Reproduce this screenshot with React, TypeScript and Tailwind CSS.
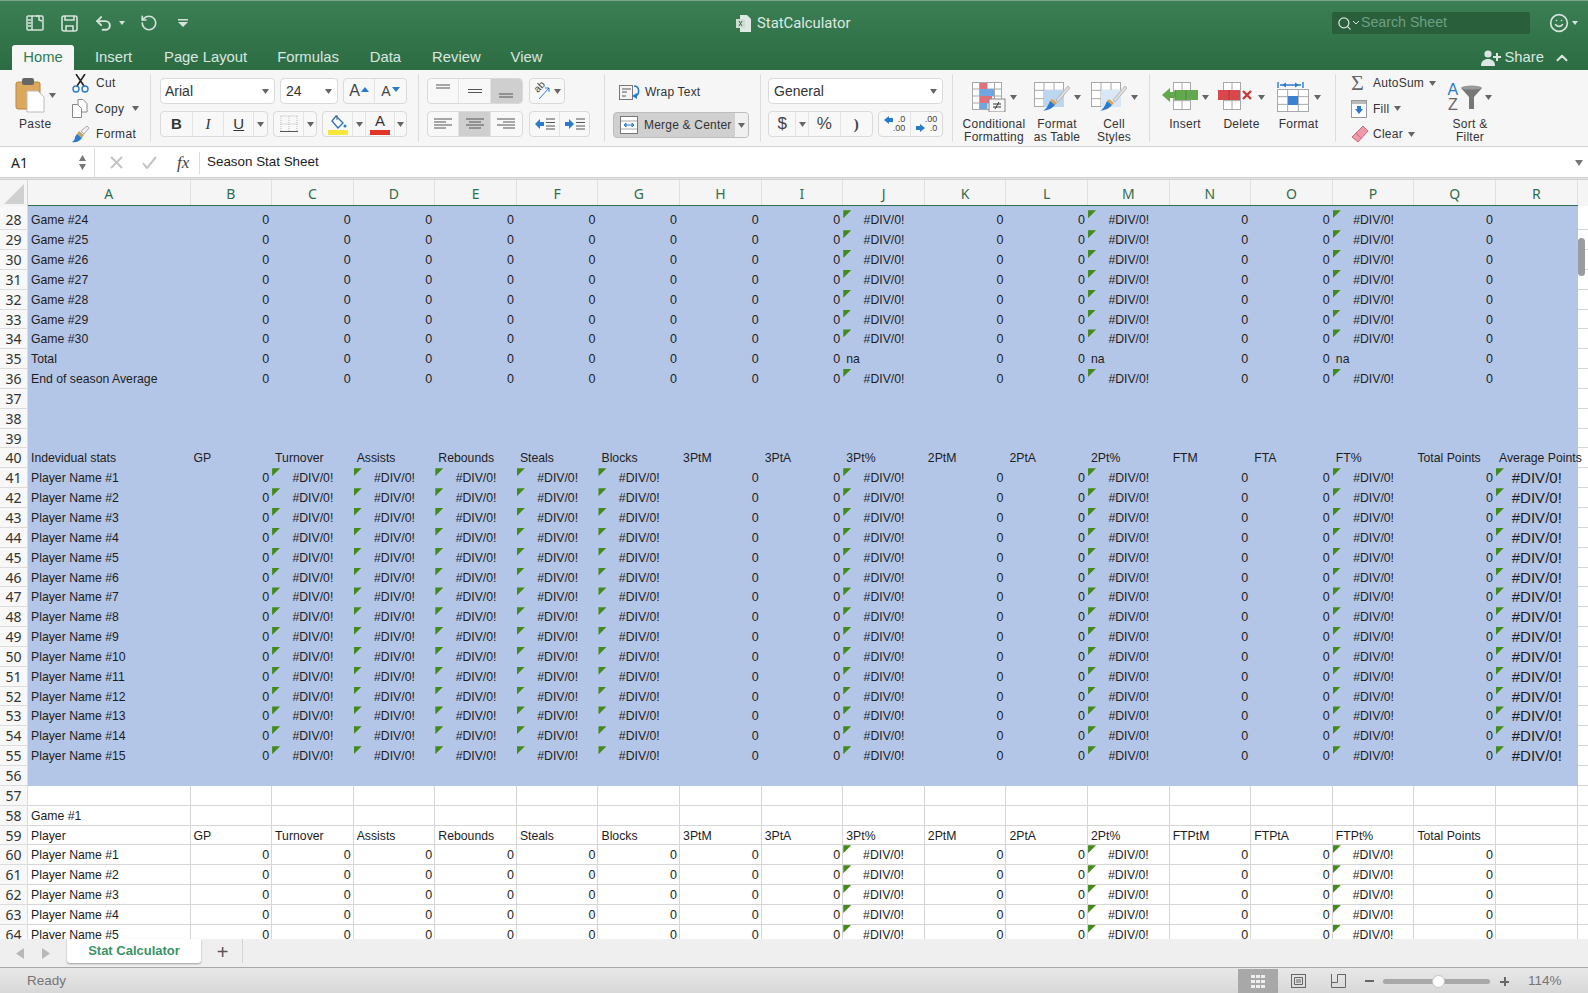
import { ReactNode } from 'react';
import { ChevronUp, RotateCcw, Search, Smile, Undo2 } from 'lucide-react';

const ARIAL = '"Liberation Sans", Arial, sans-serif';
const COLS = ['B', 'C', 'D', 'E', 'F', 'G', 'H', 'I', 'J', 'K', 'L', 'M', 'N', 'O', 'P', 'Q', 'R'];
const DIV = '#DIV/0!';

// game rows: zeros with the three percent columns erroring
const gameCells = () => ['0', '0', '0', '0', '0', '0', '0', '0', DIV, '0', '0', DIV, '0', '0', DIV, '0', ''];
const playerCells = () => ['0', DIV, DIV, DIV, DIV, DIV, '0', '0', DIV, '0', '0', DIV, '0', '0', DIV, '0', 'BIG'];

type RowData = { n: number; a: string; cells: string[] };

const rows: RowData[] = [];
for (let i = 0; i < 7; i++) rows.push({ n: 28 + i, a: `Game #${24 + i}`, cells: gameCells() });
rows.push({ n: 35, a: 'Total', cells: ['0', '0', '0', '0', '0', '0', '0', '0', 'na', '0', '0', 'na', '0', '0', 'na', '0', ''] });
rows.push({ n: 36, a: 'End of season Average', cells: gameCells() });
rows.push({ n: 37, a: '', cells: [] }, { n: 38, a: '', cells: [] }, { n: 39, a: '', cells: [] });
rows.push({
  n: 40,
  a: 'Indevidual stats',
  cells: ['GP', 'Turnover', 'Assists', 'Rebounds', 'Steals', 'Blocks', '3PtM', '3PtA', '3Pt%', '2PtM', '2PtA', '2Pt%', 'FTM', 'FTA', 'FT%', 'Total Points', 'Average Points'],
});
for (let i = 1; i <= 15; i++) rows.push({ n: 40 + i, a: `Player Name #${i}`, cells: playerCells() });
rows.push({ n: 56, a: '', cells: [] }, { n: 57, a: '', cells: [] }, { n: 58, a: 'Game #1', cells: [] });
rows.push({
  n: 59,
  a: 'Player',
  cells: ['GP', 'Turnover', 'Assists', 'Rebounds', 'Steals', 'Blocks', '3PtM', '3PtA', '3Pt%', '2PtM', '2PtA', '2Pt%', 'FTPtM', 'FTPtA', 'FTPt%', 'Total Points', ''],
});
for (let i = 1; i <= 5; i++) rows.push({ n: 59 + i, a: `Player Name #${i}`, cells: gameCells() });

function Triangle() {
  return <span className="absolute left-0 top-0 h-[8px] w-[8px] bg-[#428a1a] [clip-path:polygon(0_0,100%_0,0_100%)]" />;
}

function Cell({ value, selected }: { value: string; selected: boolean }) {
  const border = selected ? '' : 'border-r border-b border-[#d6d6d6]';
  const base = `relative h-full w-[81.6px] shrink-0 whitespace-nowrap ${border}`;
  if (value === '0')
    return <div className={`${base} text-right text-[12.5px] leading-[21.5px] ${selected ? 'pr-[3px]' : 'pr-[2px]'}`}>0</div>;
  if (value === DIV)
    return (
      <div className={`${base} text-center text-[12.25px] leading-[21.5px]`}>
        <Triangle />
        {DIV}
      </div>
    );
  if (value === 'BIG')
    return (
      <div className={`${base} text-center text-[15px] leading-[20px]`}>
        <Triangle />
        {DIV}
      </div>
    );
  return <div className={`${base} pl-[3px] text-[12.25px] leading-[21.5px]`}>{value}</div>;
}

function SheetRow({ row }: { row: RowData }) {
  const selected = row.n <= 56;
  return (
    <div className="flex h-[19.85px] shrink-0">
      <div className="w-[28px] shrink-0 border-r border-b border-[#dcdcdc] bg-[#f8f8f8] text-center font-['Noto_Sans'] text-[14px] leading-[20px] text-[#333]">
        {row.n}
      </div>
      <div className={`flex ${selected ? 'bg-[#b4c6e7]' : ''}`}>
        <div className={`h-full w-[162.5px] shrink-0 whitespace-nowrap pl-[3px] text-[12.25px] leading-[21.5px] ${selected ? '' : 'border-r border-b border-[#d6d6d6]'}`}>
          {row.a}
        </div>
        {COLS.map((c, i) => (
          <Cell key={c} value={row.cells[i] ?? ''} selected={selected} />
        ))}
      </div>
      <div className="flex-1 border-b border-[#d6d6d6]" />
    </div>
  );
}

function Caret({ className = '' }: { className?: string }) {
  return (
    <svg width="7" height="5" viewBox="0 0 7 5" className={`shrink-0 ${className}`}>
      <path d="M0 0h7L3.5 5z" fill="#666" />
    </svg>
  );
}

function Sep() {
  return <div className="h-[68px] w-px shrink-0 self-center bg-[#dedede]" />;
}

function Box({ children, className = '' }: { children: ReactNode; className?: string }) {
  return (
    <div className={`flex h-[26px] items-stretch overflow-hidden rounded-[4px] border border-[#dadada] bg-[#f8f8f8] ${className}`}>
      {children}
    </div>
  );
}

function Btn({ children, w, active, last }: { children: ReactNode; w: string; active?: boolean; last?: boolean }) {
  return (
    <div className={`flex items-center justify-center ${w} ${active ? 'bg-[#cfcfcf]' : ''} ${last ? '' : 'border-r border-[#e4e4e4]'}`}>
      {children}
    </div>
  );
}

function Bars({ offset }: { offset: number }) {
  return (
    <svg width="18" height="12" viewBox="0 0 18 12" stroke="#555" strokeWidth="1">
      <line x1="0" x2="18" y1="1" y2="1" />
      <line x1={offset === 0 ? 0 : offset === 1 ? 3 : 6} x2={offset === 0 ? 12 : offset === 1 ? 15 : 18} y1="4" y2="4" />
      <line x1="0" x2="18" y1="7" y2="7" />
      <line x1={offset === 0 ? 0 : offset === 1 ? 3 : 6} x2={offset === 0 ? 12 : offset === 1 ? 15 : 18} y1="10" y2="10" />
    </svg>
  );
}

function IndentIcon({ left }: { left: boolean }) {
  return (
    <svg width="20" height="12" viewBox="0 0 20 12">
      <path d={left ? 'M0 6l5-5v3h4v4H5v3z' : 'M9 6L4 1v3H0v4h4v3z'} fill="#2a7bcb" />
      <path d="M11 1h9M11 4.5h9M11 8h9M11 11h9" stroke="#555" />
    </svg>
  );
}

function ClipboardIcon() {
  return (
    <svg width="30" height="36" viewBox="0 0 30 36">
      <rect x="1" y="5" width="24" height="27" rx="2" fill="#dca85c" stroke="#b9873f" />
      <rect x="7" y="1" width="12" height="7" rx="2" fill="#666" />
      <path d="M12 14h11l6 6v15H12z" fill="#fff" stroke="#bbb" />
    </svg>
  );
}

function ScissorsIcon() {
  return (
    <svg width="17" height="19" viewBox="0 0 17 19" fill="none">
      <path d="M4 0l8 12M13 0L5 12" stroke="#222" strokeWidth="1.6" />
      <circle cx="4" cy="15" r="3" stroke="#2a7bcb" strokeWidth="1.4" />
      <circle cx="13" cy="15" r="3" stroke="#2a7bcb" strokeWidth="1.4" />
    </svg>
  );
}

function CopyIcon() {
  return (
    <svg width="16" height="19" viewBox="0 0 16 19" fill="#fff" stroke="#888">
      <path d="M6 .5h5l4 4V13H6z" />
      <path d="M.5 5.5h5l4 4v9h-9z" />
    </svg>
  );
}

function BrushIcon() {
  return (
    <svg width="17" height="17" viewBox="0 0 17 17">
      <path d="M9 5l6-5 2 2-5 6z" fill="#f2f2f2" stroke="#888" strokeWidth=".7" />
      <path d="M7 5l5 4-2 3-5-4z" fill="#c9a469" />
      <path d="M5 8l5 4c-2 3-6 5-10 4 2-1 3-3 3-5z" fill="#2a7bcb" />
    </svg>
  );
}

function CellGrid({ w, h, cols, rowsN }: { w: number; h: number; cols: number; rowsN: number }) {
  const lines: ReactNode[] = [];
  for (let i = 1; i < cols; i++) lines.push(<line key={`c${i}`} x1={(w / cols) * i} x2={(w / cols) * i} y1="0" y2={h} />);
  for (let i = 1; i < rowsN; i++) lines.push(<line key={`r${i}`} x1="0" x2={w} y1={(h / rowsN) * i} y2={(h / rowsN) * i} />);
  return (
    <g stroke="#a8a8a8" fill="none">
      <rect x=".5" y=".5" width={w - 1} height={h - 1} fill="#fff" />
      {lines}
    </g>
  );
}

function ConditionalIcon() {
  return (
    <svg width="34" height="30" viewBox="0 0 34 30">
      <CellGrid w={30} h={28} cols={4} rowsN={4} />
      <rect x="8" y="1" width="7" height="6" fill="#e0707a" />
      <rect x="8" y="7" width="14" height="7" fill="#6fa8e0" />
      <rect x="8" y="14" width="12" height="7" fill="#e0707a" />
      <rect x="8" y="21" width="7" height="6" fill="#6fa8e0" />
      <rect x="17" y="17" width="16" height="13" fill="#f7f7f7" stroke="#888" />
      <path d="M21 22h8M21 25h8M27 20l-4 7" stroke="#333" />
    </svg>
  );
}

function TableIcon({ styles }: { styles?: boolean }) {
  return (
    <svg width="36" height="30" viewBox="0 0 36 30">
      <CellGrid w={30} h={25} cols={3} rowsN={3} />
      <rect x="10" y="8" width="20" height="17" fill={styles ? '#d9e8f7' : '#bcd6f0'} />
      <path d="M22 18L34 4l2 2-12 14z" fill="#dedede" stroke="#999" strokeWidth=".6" />
      <path d="M18 17l5 4-2 2-5-4z" fill="#e0a24a" />
      <path d="M16 19l5 4c-3 4-8 5-12 6 3-2 5-5 7-10z" fill="#2a7bcb" />
    </svg>
  );
}

function InsertIcon() {
  return (
    <svg width="36" height="30" viewBox="0 0 36 30">
      <g transform="translate(11 0)">
        <CellGrid w={18} h={28} cols={2} rowsN={3} />
      </g>
      <rect x="13" y="8" width="23" height="10" fill="#61a94c" />
      <path d="M13 8v10M24 8v10" stroke="#4c8c3a" />
      <path d="M0 13l8-7v4h5v6H8v4z" fill="#61a94c" />
    </svg>
  );
}

function DeleteIcon() {
  return (
    <svg width="36" height="30" viewBox="0 0 36 30">
      <g transform="translate(5 0)">
        <CellGrid w={18} h={28} cols={2} rowsN={3} />
      </g>
      <rect x="0" y="8" width="22" height="10" fill="#d8474b" />
      <path d="M11 8v10" stroke="#b83438" />
      <path d="M25 9l8 8M33 9l-8 8" stroke="#c8373b" strokeWidth="2.4" />
    </svg>
  );
}

function FormatCellIcon() {
  return (
    <svg width="33" height="30" viewBox="0 0 33 30">
      <path d="M1 0v6M26 0v6M3 3h21" stroke="#2a7bcb" strokeWidth="1.4" />
      <path d="M5 3l4-2.5v5zM22 3l-4-2.5v5z" fill="#2a7bcb" />
      <g transform="translate(0 7)">
        <CellGrid w={32} h={23} cols={3} rowsN={3} />
      </g>
      <rect x="11" y="14" width="10" height="9" fill="#3a82d0" />
    </svg>
  );
}

function BigBtn({ icon, label, w, caret }: { icon: ReactNode; label: ReactNode; w: string; caret?: boolean }) {
  return (
    <div className={`flex flex-col items-center ${w}`}>
      <div className="flex h-[36px] items-center gap-[4px]">
        {icon}
        {caret && <Caret />}
      </div>
      <div className="mt-[3px] whitespace-nowrap text-center text-[12px] leading-[13px] tracking-[0.25px] text-[#333]">{label}</div>
    </div>
  );
}

function TitleBar() {
  return (
    <div className="h-[70px] shrink-0 border-t border-[#79a58a] bg-gradient-to-b from-[#3b7f54] to-[#2c6c42] text-white">
      <div className="relative flex h-[44px] items-center">
        <div className="flex items-center pl-[26px]">
          <svg width="18" height="16" viewBox="0 0 18 16" fill="none" stroke="#d5e3da" strokeWidth="1.5">
            <rect x="1" y="1" width="16" height="14" rx="1" />
            <path d="M6 1v14M2 5h3M2 8h3M2 11h3M10 1h3v4l3 1" />
          </svg>
          <svg width="17" height="17" viewBox="0 0 17 17" fill="none" stroke="#d5e3da" strokeWidth="1.6" className="ml-[17px]">
            <rect x="1" y="1" width="15" height="15" rx="2" />
            <path d="M4 1v4h9V1M5 16v-5h7v5" />
          </svg>
          <Undo2 size={19} strokeWidth={2.5} color="#d5e3da" className="ml-[16px]" />
          <svg width="6" height="4" viewBox="0 0 6 4" className="ml-[6px]">
            <path d="M0 0h6L3 4z" fill="#d5e3da" />
          </svg>
          <RotateCcw size={18} strokeWidth={2.2} color="#d5e3da" className="ml-[15px]" />
          <svg width="10" height="10" viewBox="0 0 10 10" fill="#d5e3da" className="ml-[20px]">
            <rect y="1" width="10" height="1.5" />
            <path d="M0 4h10L5 9z" />
          </svg>
        </div>
        <div className="absolute left-[736px] flex items-center gap-[6px] font-['Roboto'] text-[14.8px] text-[#dfe9e3]">
          <svg width="15" height="17" viewBox="0 0 15 17">
            <path d="M4 0h7l4 4v13H4z" fill="#dfe9e3" />
            <rect x="0" y="4" width="9" height="9" fill="#cfdcd4" />
            <path d="M3 6l3 5M6 6l-3 5" stroke="#2c6c42" />
          </svg>
          StatCalculator
        </div>
        <div className="ml-auto flex items-center pr-[10px]">
          <div className="flex h-[22px] w-[198px] items-center rounded-[2px] bg-[#2a5f3c] pl-[5px] text-[14.2px] font-medium text-[#6e9f82]">
            <Search size={15} color="#d5e3da" />
            <svg width="6" height="4" viewBox="0 0 6 4" className="ml-[1px] mr-[2px]">
              <path d="M0 0l3 3 3-3" stroke="#d5e3da" fill="none" />
            </svg>
            Search Sheet
          </div>
          <Smile size={20} color="#d5e3da" className="ml-[19px]" />
          <svg width="6" height="4" viewBox="0 0 6 4" className="ml-[3px]">
            <path d="M0 0h6L3 4z" fill="#d5e3da" />
          </svg>
        </div>
      </div>
      <div className="flex h-[25px] items-end text-[14.8px] font-medium text-[#dbe7e0]">
        <div className="ml-[12px] flex h-[25px] w-[62px] items-center justify-center rounded-t-[3px] bg-[#f6f6f6] text-[#2f7d54]">Home</div>
        <div className="ml-[21px] flex h-[25px] items-center">Insert</div>
        <div className="ml-[32px] flex h-[25px] items-center">Page Layout</div>
        <div className="ml-[30px] flex h-[25px] items-center">Formulas</div>
        <div className="ml-[31px] flex h-[25px] items-center">Data</div>
        <div className="ml-[31px] flex h-[25px] items-center">Review</div>
        <div className="ml-[30px] flex h-[25px] items-center">View</div>
        <div className="ml-auto flex h-[25px] items-center pr-[17px]">
          <svg width="20" height="16" viewBox="0 0 20 16" fill="#dbe7e0">
            <circle cx="7" cy="4" r="3.6" />
            <path d="M0 16c0-5 3-7 7-7s7 2 7 7z" />
            <path d="M15 3h2v3h3v2h-3v3h-2V8h-3V6h3z" />
          </svg>
          <span className="ml-[4px]">Share</span>
          <ChevronUp size={18} strokeWidth={2.6} color="#dbe7e0" className="ml-[9px]" />
        </div>
      </div>
    </div>
  );
}

function Ribbon() {
  return (
    <div className="flex h-[77px] shrink-0 items-start border-b border-[#d4d4d4] bg-[#f6f6f6] text-[#333]">
      {/* clipboard */}
      <div className="flex h-full w-[150px] shrink-0 text-[12px] tracking-[0.35px]">
        <div className="flex w-[72px] flex-col pl-[15px] pt-[7px]">
          <div className="flex items-center gap-[4px]">
            <ClipboardIcon />
            <Caret />
          </div>
          <div className="ml-[4px] mt-[4px] leading-[14px]">Paste</div>
        </div>
        <div className="flex flex-col gap-[7.5px] pt-[4px]">
          <div className="flex h-[18px] items-center gap-[7px]">
            <ScissorsIcon />
            Cut
          </div>
          <div className="flex h-[18px] items-center gap-[7px]">
            <CopyIcon />
            Copy
            <Caret className="ml-[1px]" />
          </div>
          <div className="flex h-[18px] items-center gap-[7px]">
            <BrushIcon />
            Format
          </div>
        </div>
      </div>
      <Sep />
      {/* font */}
      <div className="flex w-[267px] shrink-0 flex-col gap-[7px] pl-[9px] pt-[8px]">
        <div className="flex gap-[5px]">
          <div className="flex h-[26px] w-[115px] items-center justify-between rounded-[4px] border border-[#dadada] bg-white pl-[4px] pr-[5px] text-[14px]">
            Arial
            <Caret />
          </div>
          <div className="flex h-[26px] w-[58px] items-center justify-between rounded-[4px] border border-[#dadada] bg-white pl-[5px] pr-[5px] text-[14px]">
            24
            <Caret />
          </div>
          <Box className="w-[64px] text-[#444]">
            <Btn w="w-[32px]">
              <span className="text-[16px]">A</span>
              <svg width="8" height="5" viewBox="0 0 8 5" className="mb-[4px] ml-[1px]">
                <path d="M0 5h8L4 0z" fill="#2a7bcb" />
              </svg>
            </Btn>
            <Btn w="w-[32px]" last>
              <span className="text-[14px]">A</span>
              <svg width="8" height="5" viewBox="0 0 8 5" className="mb-[4px] ml-[1px]">
                <path d="M0 0h8L4 5z" fill="#2a7bcb" />
              </svg>
            </Btn>
          </Box>
        </div>
        <div className="flex gap-[5px]">
          <Box className="w-[108px] text-[15px] text-[#333]">
            <Btn w="w-[32px]">
              <span className="font-bold">B</span>
            </Btn>
            <Btn w="w-[32px]">
              <span className="font-['Liberation_Serif'] italic">I</span>
            </Btn>
            <Btn w="w-[30px]">
              <span className="underline">U</span>
            </Btn>
            <Btn w="w-[13px]" last>
              <Caret />
            </Btn>
          </Box>
          <Box className="w-[44px]">
            <Btn w="w-[31px]">
              <svg width="18" height="18" viewBox="0 0 18 18" fill="none">
                <path d="M.5 1h17M.5 9h17M1 1v15M9 1v15M17 1v15" stroke="#bbb" strokeDasharray="1 1" />
                <path d="M0 16.5h18" stroke="#555" />
              </svg>
            </Btn>
            <Btn w="w-[12px]" last>
              <Caret />
            </Btn>
          </Box>
          <Box className="w-[85px]">
            <Btn w="w-[30px]">
              <svg width="20" height="21" viewBox="0 0 20 21">
                <path d="M8 2l7 7-5 5-6-7z" fill="#fff" stroke="#2a6fb5" strokeWidth="1.3" />
                <path d="M9 1v5" stroke="#666" />
                <circle cx="17" cy="12" r="1.5" fill="#2a7bcb" />
                <rect x="0" y="16" width="20" height="5" fill="#f5e73c" />
              </svg>
            </Btn>
            <Btn w="w-[13px]">
              <Caret />
            </Btn>
            <Btn w="w-[29px]">
              <div className="flex flex-col items-center">
                <span className="text-[15px] leading-[14px]">A</span>
                <div className="mt-[2px] h-[5px] w-[20px] bg-[#e2352a]" />
              </div>
            </Btn>
            <Btn w="w-[11px]" last>
              <Caret />
            </Btn>
          </Box>
        </div>
      </div>
      <Sep />
      {/* alignment */}
      <div className="flex w-[185px] shrink-0 flex-col gap-[7px] pl-[8px] pt-[8px]">
        <div className="flex gap-[6px]">
          <Box className="w-[96px]">
            <Btn w="w-[32px]">
              <svg width="14" height="16" viewBox="0 0 14 16" stroke="#555">
                <path d="M0 2h14M0 5h14" />
              </svg>
            </Btn>
            <Btn w="w-[32px]">
              <svg width="14" height="16" viewBox="0 0 14 16" stroke="#555">
                <path d="M0 6.5h14M0 9.5h14" />
              </svg>
            </Btn>
            <Btn w="w-[32px]" active last>
              <svg width="14" height="16" viewBox="0 0 14 16" stroke="#555">
                <path d="M0 11h14M0 14h14" />
              </svg>
            </Btn>
          </Box>
          <Box className="w-[36px]">
            <div className="flex flex-1 items-center justify-center gap-[3px]">
              <div className="relative h-[18px] w-[18px]">
                <span className="absolute left-[1px] top-[-1px] -rotate-45 text-[10px] leading-[12px] text-[#444]">ab</span>
                <svg width="18" height="18" viewBox="0 0 18 18" className="absolute left-0 top-0">
                  <path d="M6 17L16 6M16 6h-4M16 6v4" stroke="#2a7bcb" fill="none" />
                </svg>
              </div>
              <Caret />
            </div>
          </Box>
        </div>
        <div className="flex gap-[6px]">
          <Box className="w-[96px]">
            <Btn w="w-[32px]">
              <Bars offset={0} />
            </Btn>
            <Btn w="w-[32px]" active>
              <Bars offset={1} />
            </Btn>
            <Btn w="w-[32px]" last>
              <Bars offset={2} />
            </Btn>
          </Box>
          <Box className="w-[61px]">
            <Btn w="w-[31px]">
              <IndentIcon left />
            </Btn>
            <Btn w="w-[30px]" last>
              <IndentIcon left={false} />
            </Btn>
          </Box>
        </div>
      </div>
      <Sep />
      {/* wrap and merge */}
      <div className="flex w-[155px] shrink-0 flex-col gap-[7px] pl-[8px] pt-[9px] text-[12px] font-medium tracking-[0.2px]">
        <div className="flex h-[26px] items-center pl-[6px]">
          <svg width="22" height="16" viewBox="0 0 22 16" fill="none">
            <rect x=".5" y="1.5" width="13" height="14" stroke="#777" />
            <path d="M3 5h9M3 8h5M3 12h4" stroke="#555" />
            <path d="M15 2c6 0 6 9 1 10" stroke="#2a7bcb" strokeWidth="1.6" />
            <path d="M18 9l-5 3 5 3z" fill="#2a7bcb" />
          </svg>
          <span className="ml-[4px]">Wrap Text</span>
        </div>
        <div className="flex h-[26px] w-[136px] items-stretch overflow-hidden rounded-[4px] border border-[#bdbdbd] bg-[#d0d0d0]">
          <div className="flex flex-1 items-center pl-[6px]">
            <svg width="18" height="18" viewBox="0 0 18 18" fill="#fff">
              <rect x=".5" y=".5" width="17" height="17" stroke="#777" />
              <path d="M1 5h16M1 13h16" stroke="#aaa" />
              <path d="M4 9h10M4 9l2-2v4zM14 9l-2-2v4z" stroke="#2a7bcb" />
            </svg>
            <span className="ml-[6px] whitespace-nowrap">Merge &amp; Center</span>
          </div>
          <div className="flex w-[13px] items-center justify-center bg-[#f0f0f0]">
            <Caret />
          </div>
        </div>
      </div>
      <Sep />
      {/* number */}
      <div className="flex w-[191px] shrink-0 flex-col gap-[7px] pl-[7px] pt-[8px]">
        <div className="flex h-[26px] w-[175px] items-center justify-between rounded-[4px] border border-[#dadada] bg-white pl-[5px] pr-[5px] text-[14px]">
          General
          <Caret />
        </div>
        <div className="flex w-[175px] justify-between">
          <Box className="w-[105px] text-[#444]">
            <Btn w="w-[28px]">
              <span className="text-[17px]">$</span>
            </Btn>
            <Btn w="w-[13px]">
              <Caret />
            </Btn>
            <Btn w="w-[32px]">
              <span className="text-[17px]">%</span>
            </Btn>
            <Btn w="w-[32px]" last>
              <span className="font-['Liberation_Serif'] text-[15px] font-bold leading-[18px]">)</span>
            </Btn>
          </Box>
          <Box className="w-[65px] text-[9px] leading-[9px] text-[#444]">
            <Btn w="w-[33px]">
              <svg width="9" height="8" viewBox="0 0 9 8" className="mb-[8px]">
                <path d="M0 4l5-4v2h4v4H5v2z" fill="#2a7bcb" />
              </svg>
              <div className="text-right">
                .0
                <br />
                .00
              </div>
            </Btn>
            <Btn w="w-[32px]" last>
              <svg width="9" height="8" viewBox="0 0 9 8" className="mt-[8px]">
                <path d="M9 4L4 0v2H0v4h4v2z" fill="#2a7bcb" />
              </svg>
              <div className="text-right">
                .00
                <br />
                .0
              </div>
            </Btn>
          </Box>
        </div>
      </div>
      <Sep />
      {/* styles */}
      <div className="flex w-[196px] shrink-0 pl-[5px] pt-[9px]">
        <BigBtn w="w-[72px]" icon={<ConditionalIcon />} caret label={<>Conditional<br />Formatting</>} />
        <BigBtn w="w-[54px]" icon={<TableIcon />} caret label={<>Format<br />as Table</>} />
        <BigBtn w="w-[60px]" icon={<TableIcon styles />} caret label={<>Cell<br />Styles</>} />
      </div>
      <Sep />
      {/* cells */}
      <div className="flex w-[185px] shrink-0 pl-[7px] pt-[9px]">
        <BigBtn w="w-[56px]" icon={<InsertIcon />} caret label="Insert" />
        <BigBtn w="w-[57px]" icon={<DeleteIcon />} caret label="Delete" />
        <BigBtn w="w-[57px]" icon={<FormatCellIcon />} caret label="Format" />
      </div>
      <Sep />
      {/* editing */}
      <div className="flex shrink-0 text-[12px] tracking-[0.25px]">
        <div className="flex w-[104px] flex-col gap-[7.5px] pl-[15px] pt-[4px]">
          <div className="flex h-[18px] items-center">
            <span className="w-[22px] font-['Liberation_Serif'] text-[22px] leading-[18px] text-[#666]">Σ</span>
            AutoSum
            <Caret className="ml-[5px]" />
          </div>
          <div className="flex h-[18px] items-center">
            <svg width="16" height="18" viewBox="0 0 16 18" className="mr-[6px]">
              <rect x=".5" y=".5" width="15" height="17" fill="#fff" stroke="#999" />
              <rect x="1" y="1" width="14" height="3" fill="#bbb" />
              <path d="M8 14L4 9h2V6h4v3h2z" fill="#2a7bcb" />
            </svg>
            Fill
            <Caret className="ml-[5px]" />
          </div>
          <div className="flex h-[18px] items-center">
            <svg width="18" height="18" viewBox="0 0 18 18" className="mr-[4px]">
              <path d="M12 1l5 5L7 17l-6-5z" fill="#ee9aab" stroke="#c96a7e" />
              <path d="M5 8l5 5" stroke="#c96a7e" />
            </svg>
            Clear
            <Caret className="ml-[5px]" />
          </div>
        </div>
        <div className="flex w-[60px] flex-col items-center pt-[9px]">
          <div className="flex h-[36px] items-center gap-[3px]">
            <div className="flex flex-col items-center text-[16px] leading-[15px]">
              <span className="text-[#2a7bcb]">A</span>
              <span className="text-[#666]">Z</span>
            </div>
            <svg width="21" height="24" viewBox="0 0 21 24">
              <ellipse cx="10.5" cy="3" rx="10.5" ry="2.5" fill="#999" />
              <path d="M0 3c3 2 18 2 21 0l-8 9v12h-5V12z" fill="#777" />
            </svg>
            <Caret />
          </div>
          <div className="mt-[3px] whitespace-nowrap text-center leading-[13px]">
            Sort &amp;
            <br />
            Filter
          </div>
        </div>
      </div>
    </div>
  );
}

function FormulaBar() {
  return (
    <div className="flex h-[30px] shrink-0 items-center bg-white pt-[1px]">
      <div className="flex h-full w-[95px] shrink-0 items-center justify-between border-r border-[#dcdcdc] pl-[11px] pr-[8px] font-['Noto_Sans'] text-[14px]">
        A1
        <svg width="7" height="15" viewBox="0 0 7 15" fill="#777">
          <path d="M0 6h7L3.5 0zM0 9h7l-3.5 6z" />
        </svg>
      </div>
      <svg width="13" height="13" viewBox="0 0 13 13" stroke="#c4c4c4" strokeWidth="2" className="ml-[15px]">
        <path d="M1 1l11 11M12 1L1 12" />
      </svg>
      <svg width="15" height="13" viewBox="0 0 15 13" stroke="#c4c4c4" strokeWidth="2" fill="none" className="ml-[19px]">
        <path d="M1 7l4 5 9-11" />
      </svg>
      <span className="ml-[20px] w-[20px] font-['Liberation_Serif'] text-[17px] italic text-[#444]">fx</span>
      <div className="ml-[2px] mr-[7px] h-[22px] w-px bg-[#dcdcdc]" />
      <span className="text-[13.4px]">Season Stat Sheet</span>
      <svg width="8" height="6" viewBox="0 0 8 6" className="ml-auto mr-[5px]">
        <path d="M0 0h8L4 6z" fill="#777" />
      </svg>
    </div>
  );
}

function ColumnHeader() {
  return (
    <div className="flex h-[26px] shrink-0 bg-[#f5f5f5] font-['Noto_Sans'] text-[14px] leading-[27px] text-[#2f6e4d]">
      <div className="relative w-[28px] shrink-0 border-r border-[#d6d6d6]">
        <span className="absolute bottom-[2px] right-[3px] h-[20px] w-[20px] bg-[#d0d0d0] [clip-path:polygon(100%_0,100%_100%,0_100%)]" />
      </div>
      <div className="flex border-b-[1.5px] border-[#2f6e4d]">
        <div className="w-[162.5px] shrink-0 border-r border-[#e0e0e0] text-center">A</div>
        {COLS.map((c) => (
          <div key={c} className="w-[81.6px] shrink-0 border-r border-[#e0e0e0] text-center">
            {c}
          </div>
        ))}
      </div>
    </div>
  );
}

function SheetTabs() {
  return (
    <div className="flex h-[29px] shrink-0 items-start border-b border-[#a8a8a8] bg-[#efefef]">
      <svg width="8" height="11" viewBox="0 0 8 11" fill="#b8b8b8" className="ml-[16px] mt-[9px]">
        <path d="M8 0v11L0 5.5z" />
      </svg>
      <svg width="8" height="11" viewBox="0 0 8 11" fill="#b8b8b8" className="ml-[18px] mt-[9px]">
        <path d="M0 0v11l8-5.5z" />
      </svg>
      <div className="ml-[17px] flex h-[24px] w-[134px] items-center justify-center rounded-b-[3px] bg-white pb-[1px] text-[13px] font-bold text-[#3b9363] shadow-[0_1px_2px_rgba(0,0,0,0.35)]">
        Stat Calculator
      </div>
      <div className="flex h-[24px] w-[42px] items-center justify-center border-r border-[#d4d4d4] pl-[2px] pt-[1px] text-[20px] leading-none text-[#555]">+</div>
    </div>
  );
}

function StatusBar() {
  return (
    <div className="flex h-[25px] shrink-0 items-center bg-gradient-to-b from-[#e8e8e8] to-[#d8d8d8] pt-[1px] text-[13.5px] text-[#757575]">
      <span className="ml-[27px]">Ready</span>
      <div className="ml-auto flex h-full w-[40px] items-center justify-center bg-[#a8a8a8]">
        <svg width="14" height="13" viewBox="0 0 14 13" fill="#eee">
          <path d="M0 0h4v3H0zM5 0h4v3H5zM10 0h4v3h-4zM0 5h4v3H0zM5 5h4v3H5zM10 5h4v3h-4zM0 10h4v3H0zM5 10h4v3H5zM10 10h4v3h-4z" />
        </svg>
      </div>
      <div className="flex w-[40px] items-center justify-center">
        <svg width="15" height="14" viewBox="0 0 15 14" fill="none" stroke="#666">
          <rect x=".5" y=".5" width="14" height="13" />
          <path d="M3.5 3.5h8v7h-8zM5 6h5M5 8h5" />
        </svg>
      </div>
      <div className="flex w-[40px] items-center justify-center">
        <svg width="15" height="14" viewBox="0 0 15 14" fill="none" stroke="#666">
          <path d="M.5 0v13.5h14V0M.5 8.5h6v-8M14.5 .5h-8" />
        </svg>
      </div>
      <div className="ml-[7px] h-[2px] w-[9px] bg-[#666]" />
      <div className="relative ml-[9px] h-[5px] w-[107px] rounded-full bg-[#a8a8a8]">
        <span className="absolute left-[49px] top-[-4px] h-[13px] w-[13px] rounded-full border border-[#c4c4c4] bg-white" />
      </div>
      <div className="relative ml-[10px] h-[9px] w-[9px]">
        <span className="absolute left-0 top-[4px] h-[2px] w-[9px] bg-[#666]" />
        <span className="absolute left-[4px] top-0 h-[9px] w-[2px] bg-[#666]" />
      </div>
      <span className="ml-[19px] mr-[27px] w-[33px]">114%</span>
    </div>
  );
}

export default function App() {
  return (
    <div className="flex h-[993px] w-[1588px] flex-col overflow-hidden bg-white text-[#1d1d1d]" style={{ fontFamily: ARIAL }}>
      <TitleBar />
      <Ribbon />
      <FormulaBar />
      <div className="h-[3px] shrink-0 border-y border-[#cfcfcf] bg-[#e6e6e6]" />
      <ColumnHeader />
      <div className="relative flex min-h-0 flex-1 flex-col overflow-hidden">
        <div className="flex h-[4.35px] shrink-0">
          <div className="w-[28px] shrink-0 border-r border-[#dcdcdc] bg-[#f8f8f8]" />
          <div className="w-[1550px] shrink-0 bg-[#b4c6e7]" />
        </div>
        {rows.map((r) => (
          <SheetRow key={r.n} row={r} />
        ))}
        <div className="absolute left-[1578px] top-[32px] h-[38px] w-[7px] rounded-full bg-[#9c9c9c]" />
      </div>
      <SheetTabs />
      <StatusBar />
    </div>
  );
}
